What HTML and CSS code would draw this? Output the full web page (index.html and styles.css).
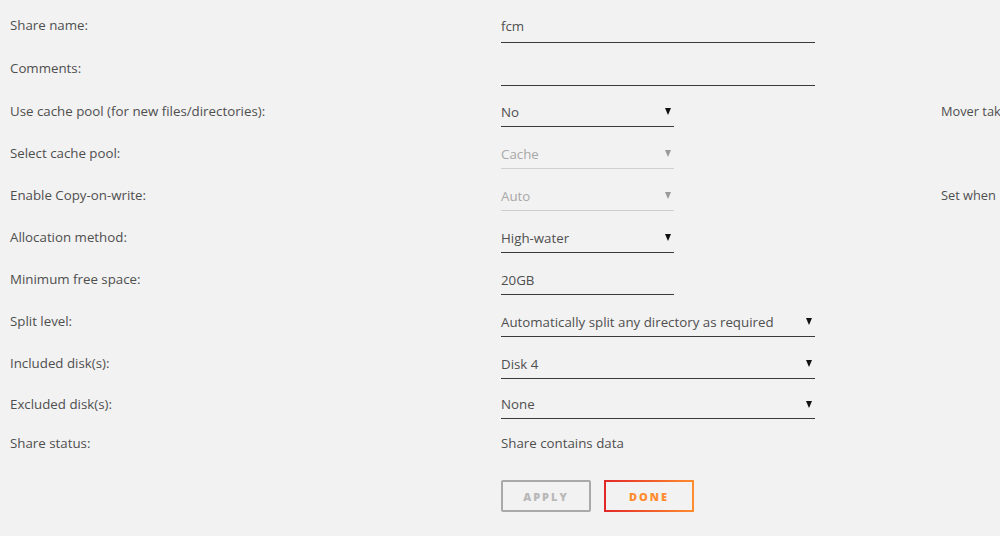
FILE: index.html
```html
<!DOCTYPE html>
<html lang="en">
  <head>
    <meta charset="utf-8">
    <title>Share Settings</title>
    <link rel="stylesheet" href="styles.css">
  </head>
  <body>
    <form class="share-form">
      <div class="row">
        <div class="label">Share name:</div>
        <div class="cell"><div class="field wide tall"><span class="value">fcm</span></div></div>
      </div>
      <div class="row row-44">
        <div class="label">Comments:</div>
        <div class="cell"><div class="field wide tall"><span class="value"></span></div></div>
      </div>
      <div class="row">
        <div class="label">Use cache pool (for new files/directories):</div>
        <div class="cell"><div class="field narrow select"><span class="value">No</span><span class="arrow"></span></div></div>
        <div class="note">Mover tak</div>
      </div>
      <div class="row">
        <div class="label">Select cache pool:</div>
        <div class="cell"><div class="field narrow select disabled"><span class="value">Cache</span><span class="arrow"></span></div></div>
      </div>
      <div class="row">
        <div class="label">Enable Copy-on-write:</div>
        <div class="cell"><div class="field narrow select disabled"><span class="value">Auto</span><span class="arrow"></span></div></div>
        <div class="note">Set when</div>
      </div>
      <div class="row">
        <div class="label">Allocation method:</div>
        <div class="cell"><div class="field narrow select"><span class="value">High-water</span><span class="arrow"></span></div></div>
      </div>
      <div class="row">
        <div class="label">Minimum free space:</div>
        <div class="cell"><div class="field narrow"><span class="value">20GB</span></div></div>
      </div>
      <div class="row">
        <div class="label">Split level:</div>
        <div class="cell"><div class="field wide select"><span class="value">Automatically split any directory as required</span><span class="arrow"></span></div></div>
      </div>
      <div class="row">
        <div class="label">Included disk(s):</div>
        <div class="cell"><div class="field wide select"><span class="value">Disk 4</span><span class="arrow"></span></div></div>
      </div>
      <div class="row row-39">
        <div class="label">Excluded disk(s):</div>
        <div class="cell"><div class="field wide select"><span class="value">None</span><span class="arrow"></span></div></div>
      </div>
      <div class="row row-39">
        <div class="label">Share status:</div>
        <div class="cell status">Share contains data</div>
      </div>
      <div class="actions">
        <button type="button" class="btn btn-apply">Apply</button>
        <button type="button" class="btn btn-done">Done</button>
      </div>
    </form>
  </body>
</html>
```
FILE: styles.css
```css
html {
  overflow: hidden;
}
body {
  background-color: #f2f2f2;
  color: #4f4f4f;
  font-family: 'Open Sans', 'DejaVu Sans', sans-serif;
  font-size: 13.3px;
  margin: 0;
  padding: 4px 0 0 10px;
}
.share-form {
  display: flex;
  flex-direction: column;
}
.row {
  display: flex;
  align-items: center;
  height: 42px;
  white-space: nowrap;
}
.row-44 {
  height: 44px;
}
.row-39 {
  height: 39px;
}
.label {
  width: 491px;
  flex-shrink: 0;
}
.cell {
  width: 440px;
  flex-shrink: 0;
}
.note {
  font-size: 12.8px;
}
.field {
  height: 31px;
  display: flex;
  align-items: center;
  justify-content: space-between;
  border-bottom: 1px solid #3a3a3a;
  box-sizing: border-box;
  padding-top: 2px;
}
.field.tall {
  height: 35px;
}
.field.wide {
  width: 314px;
}
.field.narrow {
  width: 173px;
}
.field .arrow {
  width: 0;
  height: 0;
  margin-right: 3px;
  border-left: 3px solid transparent;
  border-right: 3px solid transparent;
  border-top: 7px solid #111;
}
.field.disabled {
  color: #a8a8a8;
  border-bottom-color: #cfcfcf;
}
.field.disabled .arrow {
  border-top-color: #9a9a9a;
}
.status {
  padding-top: 1px;
}
.actions {
  display: flex;
  gap: 13px;
  margin: 18px 0 0 491px;
}
.btn {
  width: 90px;
  height: 32px;
  background: transparent;
  border: 2px solid #a9a9a9;
  border-radius: 2px;
  font-family: 'Open Sans', 'DejaVu Sans', sans-serif;
  font-size: 11px;
  font-weight: 800;
  letter-spacing: 2px;
  text-transform: uppercase;
  color: #b8b8b8;
  cursor: pointer;
}
.btn-done {
  color: #ff8c2f;
  border-image: linear-gradient(90deg, #e22828 0, #ff8c2f) 1;
}
```
